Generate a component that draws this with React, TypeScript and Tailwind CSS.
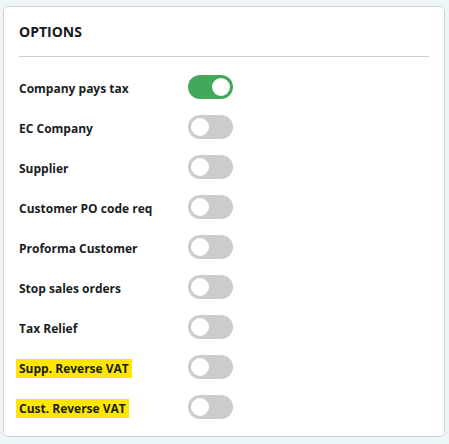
import { useState } from "react";

const options = [
  { label: "Company pays tax", on: true },
  { label: "EC Company", on: false },
  { label: "Supplier", on: false },
  { label: "Customer PO code req", on: false },
  { label: "Proforma Customer", on: false },
  { label: "Stop sales orders", on: false },
  { label: "Tax Relief", on: false },
  { label: "Supp. Reverse VAT", on: false, mark: true },
  { label: "Cust. Reverse VAT", on: false, mark: true },
];

const Toggle = ({ on, onClick }: { on: boolean; onClick: () => void }) => (
  <button
    type="button"
    onClick={onClick}
    className={`flex h-[24px] w-[45px] items-center rounded-full px-[3px] ${
      on ? "justify-end bg-[#43a85a]" : "justify-start bg-[#cccccc]"
    }`}
  >
    <span className="h-[18px] w-[18px] rounded-full bg-white" />
  </button>
);

export default function App() {
  const [state, setState] = useState(options.map((o) => o.on));

  return (
    <div className="min-h-screen bg-[#eef5f8] pt-[6px] pl-[3px] pr-[4px] font-['Open_Sans',sans-serif]">
      <div className="h-[431px] rounded-[5px] border border-[#cfd4d6] bg-white px-[15px]">
        <h2 className="pt-[15px] pb-[14px] text-[14px] font-bold leading-[20px] text-[#15181c]">OPTIONS</h2>
        <div className="h-px bg-[#cccccc]" />
        <div className="flex flex-col pt-[10px]">
          {options.map((o, i) => (
            <div key={o.label} className="flex h-[40px] items-center">
              <div className="w-[169px]">
                <span
                  className={`text-[12px] font-bold leading-[16px] text-[#1a1d21] ${
                    o.mark ? "-ml-[3px] bg-[#ffe600] px-[3px] py-[1px]" : ""
                  }`}
                >
                  {o.label}
                </span>
              </div>
              <Toggle
                on={state[i]}
                onClick={() => setState((s) => s.map((v, j) => (j === i ? !v : v)))}
              />
            </div>
          ))}
        </div>
      </div>
    </div>
  );
}
